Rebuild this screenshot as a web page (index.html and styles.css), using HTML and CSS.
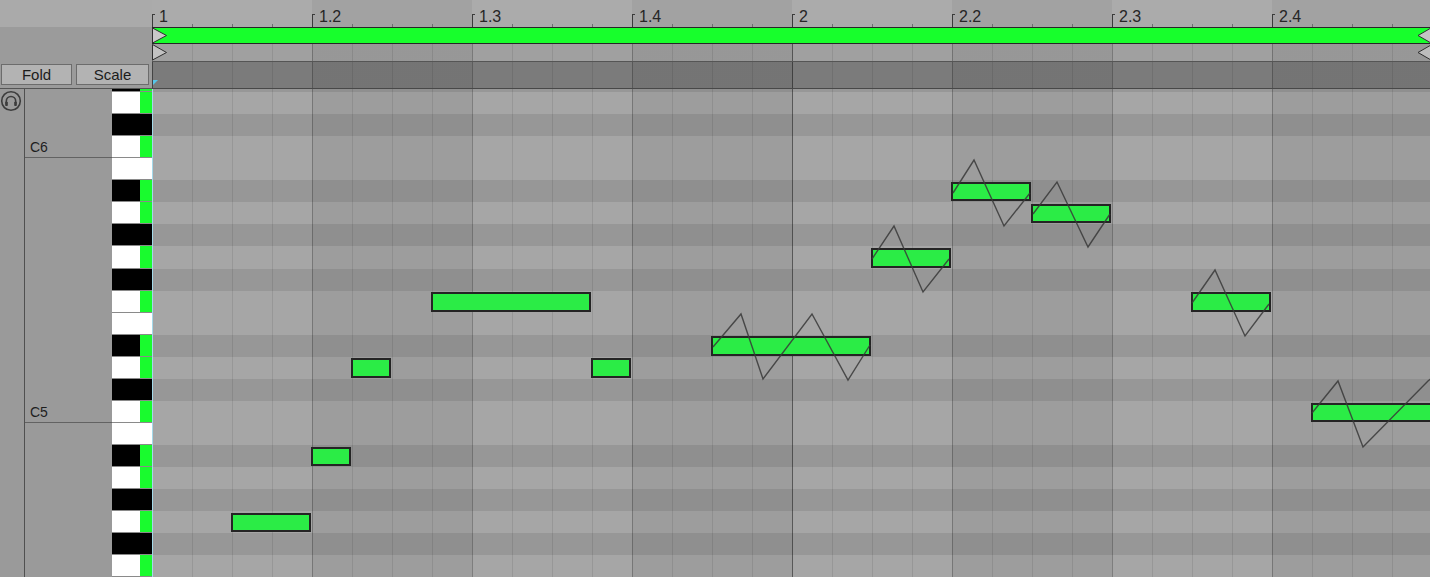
FILE: index.html
```html
<!DOCTYPE html>
<html lang="en">
<head>
  <meta charset="UTF-8">
  <title>Piano Roll</title>
  <link rel="stylesheet" href="styles.css">
</head>
<body>
  <div class="editor">
    <header class="head">
      <div class="head-side">
        <div class="head-side-top"></div>
        <div class="tools">
          <button class="tool fold">Fold</button>
          <button class="tool scale">Scale</button>
        </div>
      </div>
      <div class="timeline">
        <div class="ruler">
          <div class="beat"><span>1</span></div>
          <div class="beat"><span>1.2</span></div>
          <div class="beat"><span>1.3</span></div>
          <div class="beat"><span>1.4</span></div>
          <div class="beat"><span>2</span></div>
          <div class="beat"><span>2.2</span></div>
          <div class="beat"><span>2.3</span></div>
          <div class="beat"><span>2.4</span></div>
        </div>
        <div class="loop-row lanes"><div class="loop"></div></div>
        <div class="marker-row lanes"></div>
        <div class="fold-row lanes"></div>
        <svg class="markers" width="1278" height="89">
          <path d="M0.5 28 L14.5 35.5 L0.5 43 Z" fill="#c9c9c9" stroke="#2e2e2e"/>
          <path d="M0.5 44.5 L14.5 52.5 L0.5 60 Z" fill="#c2c2c2" stroke="#2e2e2e"/>
          <path d="M1279 28 L1266 35.5 L1279 43 Z" fill="#c4c4c4" stroke="#2e2e2e"/>
          <path d="M1279 45 L1266 52.5 L1279 60 Z" fill="#bdbdbd" stroke="#2e2e2e"/>
          <path d="M1 80 L6 80 L1 85 Z" fill="#56c6ea"/>
        </svg>
      </div>
    </header>

    <main class="body">
      <div class="preview">
        <svg width="22" height="22" viewBox="0 0 22 22">
          <circle cx="11" cy="11" r="9.3" fill="none" stroke="#3c3c3c" stroke-width="1.6"/>
          <path d="M6.3 14.5 V11.2 A4.7 4.7 0 0 1 15.7 11.2 V14.5" fill="none" stroke="#3c3c3c" stroke-width="1.6"/>
          <rect x="5.2" y="11.8" width="2.6" height="4.2" rx="0.8" fill="#3c3c3c"/>
          <rect x="14.2" y="11.8" width="2.6" height="4.2" rx="0.8" fill="#3c3c3c"/>
        </svg>
      </div>

      <div class="rows">
        <div class="row black in"><div class="lbl"></div><div class="key"></div><div class="lane"></div></div>
        <div class="row white in"><div class="lbl"></div><div class="key"></div><div class="lane"></div></div>
        <div class="row black"><div class="lbl"></div><div class="key"></div><div class="lane"></div></div>
        <div class="row white in"><div class="lbl c">C6</div><div class="key"></div><div class="lane"></div></div>
        <div class="row white"><div class="lbl"></div><div class="key"></div><div class="lane"></div></div>
        <div class="row black in"><div class="lbl"></div><div class="key"></div><div class="lane"></div></div>
        <div class="row white in"><div class="lbl"></div><div class="key"></div><div class="lane"></div></div>
        <div class="row black"><div class="lbl"></div><div class="key"></div><div class="lane"></div></div>
        <div class="row white in"><div class="lbl"></div><div class="key"></div><div class="lane"></div></div>
        <div class="row black"><div class="lbl"></div><div class="key"></div><div class="lane"></div></div>
        <div class="row white in"><div class="lbl"></div><div class="key"></div><div class="lane"></div></div>
        <div class="row white"><div class="lbl"></div><div class="key"></div><div class="lane"></div></div>
        <div class="row black in"><div class="lbl"></div><div class="key"></div><div class="lane"></div></div>
        <div class="row white in"><div class="lbl"></div><div class="key"></div><div class="lane"></div></div>
        <div class="row black"><div class="lbl"></div><div class="key"></div><div class="lane"></div></div>
        <div class="row white in"><div class="lbl c">C5</div><div class="key"></div><div class="lane"></div></div>
        <div class="row white"><div class="lbl"></div><div class="key"></div><div class="lane"></div></div>
        <div class="row black in"><div class="lbl"></div><div class="key"></div><div class="lane"></div></div>
        <div class="row white in"><div class="lbl"></div><div class="key"></div><div class="lane"></div></div>
        <div class="row black"><div class="lbl"></div><div class="key"></div><div class="lane"></div></div>
        <div class="row white in"><div class="lbl"></div><div class="key"></div><div class="lane"></div></div>
        <div class="row black"><div class="lbl"></div><div class="key"></div><div class="lane"></div></div>
        <div class="row white in"><div class="lbl"></div><div class="key"></div><div class="lane"></div></div>
      </div>

      <!-- notes: --s start (16ths), --l length, --k row from D6 -->
      <div class="roll">
        <div class="note" style="--s:2;--l:2;--k:19"></div>
        <div class="note" style="--s:4;--l:1;--k:16"></div>
        <div class="note" style="--s:5;--l:1;--k:12"></div>
        <div class="note" style="--s:7;--l:4;--k:9"></div>
        <div class="note" style="--s:11;--l:1;--k:12"></div>
        <div class="note" style="--s:14;--l:4;--k:11"></div>
        <div class="note" style="--s:18;--l:2;--k:7"></div>
        <div class="note" style="--s:20;--l:2;--k:4"></div>
        <div class="note" style="--s:22;--l:2;--k:5"></div>
        <div class="note" style="--s:26;--l:2;--k:9"></div>
        <div class="note" style="--s:29;--l:4;--k:14"></div>

        <svg class="bends" width="1278" height="488">
          <g transform="translate(-152 -89)">
            <polyline points="713,347 741,314 763,379 812,314 848,380 870,345"/>
            <polyline points="872,259 894,226 923,292 949,259"/>
            <polyline points="953,193 974,160 1004,226 1030,193"/>
            <polyline points="1033,214 1057,182 1088,247 1110,214"/>
            <polyline points="1192,303 1215,270 1245,336 1269,304"/>
            <polyline points="1312,413 1338,381 1363,447 1428,381 1440,371"/>
          </g>
        </svg>
      </div>
    </main>
  </div>
</body>
</html>
```

FILE: styles.css
```css
html, body {
  margin: 0;
  width: 1430px;
  height: 577px;
  overflow: hidden;
}
body {
  background: #9a9a9a;
  font-family: 'Liberation Sans', Arial, sans-serif;
  color: #222;
}
.editor {
  display: flex;
  flex-direction: column;
  height: 577px;
}

/* header */
.head {
  display: flex;
  height: 89px;
  flex: none;
}
.head-side {
  width: 152px;
  flex: none;
  display: flex;
  flex-direction: column;
  background: #9b9b9b;
  border-bottom: 1px solid #555;
  box-sizing: border-box;
}
.head-side-top {
  height: 27px;
  background: #aaaaaa;
}
.tools {
  margin-top: auto;
  display: flex;
  gap: 4px;
  padding: 0 0 3px 1px;
}
.tool {
  height: 21px;
  padding: 0;
  border: 1px solid #6c6c6c;
  background: #b3b3b3;
  color: #1c1c1c;
  font-family: 'Liberation Sans', Arial, sans-serif;
  font-size: 15px;
  line-height: 19px;
}
.tool.fold { width: 71px; }
.tool.scale { width: 73px; }

.timeline {
  flex: 1;
  position: relative;
  display: flex;
  flex-direction: column;
  overflow: hidden;
}
.ruler {
  height: 27px;
  display: flex;
  flex: none;
}
.beat {
  width: 160px;
  flex: none;
  position: relative;
  background: repeating-linear-gradient(90deg, #6e6e6e 0 1px, transparent 1px 40px) left bottom / 100% 3px no-repeat, #ababab;
}
.beat:nth-child(even) {
  background-color: #a2a2a2;
}
.beat::before {
  content: '';
  position: absolute;
  left: 0;
  bottom: 0;
  width: 2px;
  height: 12px;
  border-left: 1px solid #3a3a3a;
  border-top: 1px solid #3a3a3a;
}
.beat span {
  display: block;
  padding: 8px 0 0 7px;
  font-size: 16px;
  line-height: 17px;
  color: #262626;
}

.lanes, .lane {
  background-image:
    linear-gradient(90deg, transparent 640px, rgba(0,0,0,.3) 640px 641px, transparent 641px),
    repeating-linear-gradient(90deg, rgba(0,0,0,.17) 0 1px, transparent 1px 160px),
    repeating-linear-gradient(90deg, rgba(0,0,0,.09) 0 1px, transparent 1px 40px),
    repeating-linear-gradient(90deg, transparent 0 160px, rgba(0,0,0,.055) 160px 320px);
}
.loop-row {
  height: 17px;
  flex: none;
  background-color: #a0a0a0;
}
.loop {
  height: 15px;
  border-top: 1px solid #262626;
  border-bottom: 1px solid #262626;
  background: #17ff2c;
}
.marker-row {
  height: 17px;
  flex: none;
  background-color: #a0a0a0;
}
.fold-row {
  height: 26px;
  flex: none;
  border-top: 1px solid #555;
  border-bottom: 1px solid #484848;
  background-color: #7b7b7b;
  box-shadow: inset 1px 0 0 #444;
}
.markers {
  position: absolute;
  left: 0;
  top: 0;
}

/* keys and grid */
.body {
  flex: 1;
  display: flex;
  position: relative;
  overflow: hidden;
}
.preview {
  width: 24px;
  flex: none;
  border-right: 1px solid #505050;
  padding-top: 1px;
}
.preview svg {
  display: block;
}
.rows {
  flex: 1;
  display: flex;
  flex-direction: column;
}
.row {
  display: flex;
  height: 22.06px;
  flex: none;
}
.row:first-child {
  margin-top: -18.9px;
}
.lbl {
  width: 87px;
  flex: none;
  box-sizing: border-box;
  padding-left: 5px;
  font-size: 14px;
  line-height: 22px;
  color: #1e1e1e;
}
.lbl.c {
  box-shadow: inset 0 -1px 0 #626262;
}
.key {
  width: 40px;
  flex: none;
  position: relative;
  box-shadow: inset 0 -1px 0 #8a8a8a;
}
.white .key { background: #fff; }
.black .key { background: #000; }
.in .key::after {
  content: '';
  position: absolute;
  right: 0;
  top: 0;
  bottom: 1px;
  width: 12px;
  background: #19fb2e;
}
.lane {
  flex: 1;
  background-color: #a6a6a6;
  box-shadow: inset 1px 0 0 #a4d9ea;
}
.black .lane {
  background-color: #979797;
}

.roll {
  position: absolute;
  left: 152px;
  top: 0;
  right: 0;
  bottom: 0;
  pointer-events: none;
}
.note {
  position: absolute;
  left: calc(var(--s) * 40px - 1px);
  width: calc(var(--l) * 40px);
  top: calc(var(--k) * 22.06px + 4.66px);
  height: 19.5px;
  box-sizing: border-box;
  border: 2px solid #242424;
  background: #2bec46;
}
.bends {
  position: absolute;
  left: 0;
  top: 0;
}
.bends polyline {
  fill: none;
  stroke: #383838;
  stroke-width: 1.4;
  stroke-opacity: 0.85;
}
```
